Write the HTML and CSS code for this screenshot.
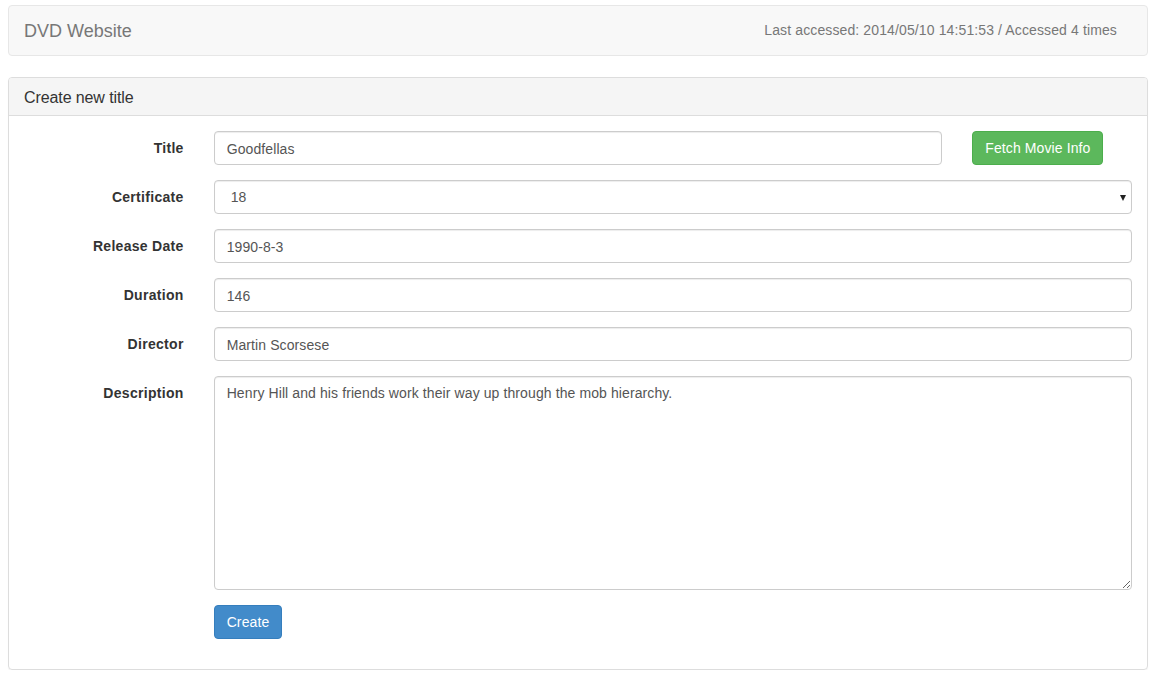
FILE: index.html
```html
<!DOCTYPE html>
<html>
<head>
<meta charset="utf-8">
<link rel="stylesheet" href="styles.css">
</head>
<body>
<div class="page">
  <nav class="navbar">
    <span class="brand">DVD Website</span>
    <span class="navbar-text">Last accessed: 2014/05/10 14:51:53 / Accessed 4 times</span>
  </nav>
  <div class="panel">
    <div class="panel-heading">Create new title</div>
    <div class="panel-body">
      <form class="form">
        <div class="row">
          <label class="label">Title</label>
          <div class="col8"><input class="control" type="text" value="Goodfellas"></div>
          <div class="col2"><button type="button" class="btn btn-green">Fetch Movie Info</button></div>
        </div>
        <div class="row">
          <label class="label">Certificate</label>
          <div class="col10 select-wrap">
            <select class="control select">
              <option>18</option>
            </select>
          </div>
        </div>
        <div class="row">
          <label class="label">Release Date</label>
          <div class="col10"><input class="control" type="text" value="1990-8-3"></div>
        </div>
        <div class="row">
          <label class="label">Duration</label>
          <div class="col10"><input class="control" type="text" value="146"></div>
        </div>
        <div class="row">
          <label class="label">Director</label>
          <div class="col10"><input class="control" type="text" value="Martin Scorsese"></div>
        </div>
        <div class="row">
          <label class="label">Description</label>
          <div class="col10"><textarea class="control textarea">Henry Hill and his friends work their way up through the mob hierarchy.</textarea></div>
        </div>
        <div class="row">
          <div class="label"></div>
          <div class="col10"><button type="button" class="btn btn-blue">Create</button></div>
        </div>
      </form>
    </div>
  </div>
</div>
</body>
</html>
```

FILE: styles.css
```css
* { box-sizing: border-box; }
html, body { margin: 0; padding: 0; background: #fff; }
body {
  font-family: "Liberation Sans", Arial, sans-serif;
  font-size: 14px;
  line-height: 1.428571;
  color: #333;
  letter-spacing: 0.1px;
}
.page { padding: 5px 3px 0 8px; width: 1151px; }
.navbar {
  display: flex;
  justify-content: space-between;
  align-items: center;
  height: 51px;
  background: #f8f8f8;
  border: 1px solid #e7e7e7;
  border-radius: 4px;
  margin-bottom: 21px;
  padding: 1px 30px 0 15px;
  width: 1140px;
}
.brand { font-size: 18px; line-height: 20px; color: #777; letter-spacing: 0; }
.navbar-text { color: #777; letter-spacing: 0.12px; }
.panel {
  width: 1140px;
  border: 1px solid #ddd;
  border-radius: 4px;
  box-shadow: 0 1px 1px rgba(0,0,0,.05);
}
.panel-heading {
  background: #f5f5f5;
  border-bottom: 1px solid #ddd;
  border-radius: 3px 3px 0 0;
  padding: 11px 15px 9px 15px;
  font-size: 16px;
  line-height: 17px;
  color: #333;
  letter-spacing: -0.1px;
}
.panel-body { padding: 15px; }
.form { display: flex; flex-direction: column; margin: 0 -15px; }
.row { display: flex; margin-bottom: 15px; align-items: flex-start; }
.label {
  flex: 0 0 189.67px;
  padding: 8px 15px 0 15px;
  text-align: right;
  font-weight: bold;
  min-height: 1px;
  letter-spacing: 0.3px;
}
.col8 { flex: 0 0 758.67px; padding: 0 15px; }
.col2 { flex: 0 0 189.67px; padding: 0 15px; }
.col10 { flex: 0 0 948.33px; padding: 0 15px; }
.control {
  display: block;
  width: 100%;
  height: 34px;
  padding: 7px 12px 5px 12px;
  font-family: "Liberation Sans", Arial, sans-serif;
  font-size: 14px;
  line-height: 1.428571;
  letter-spacing: 0.1px;
  color: #555;
  background: #fff;
  border: 1px solid #ccc;
  border-radius: 4px;
  box-shadow: inset 0 1px 1px rgba(0,0,0,.075);
  outline: none;
  margin: 0;
}
.select-wrap { position: relative; }
.select {
  -webkit-appearance: none;
  appearance: none;
  padding-left: 16px;
}
.select-wrap::after {
  content: "";
  position: absolute;
  right: 21px;
  top: 15px;
  border-left: 3.5px solid transparent;
  border-right: 3.5px solid transparent;
  border-top: 6px solid #222;
}
.textarea { height: 214px; resize: vertical; padding-top: 7px; }
.btn {
  display: inline-block;
  height: 34px;
  padding: 7px 12px 5px 12px;
  font-family: "Liberation Sans", Arial, sans-serif;
  font-size: 14px;
  line-height: 1.428571;
  letter-spacing: 0.1px;
  color: #fff;
  border: 1px solid transparent;
  border-radius: 4px;
  cursor: pointer;
  white-space: nowrap;
}
.btn-green { background: #5cb85c; border-color: #4cae4c; }
.btn-blue { background: #428bca; border-color: #357ebd; }
```
